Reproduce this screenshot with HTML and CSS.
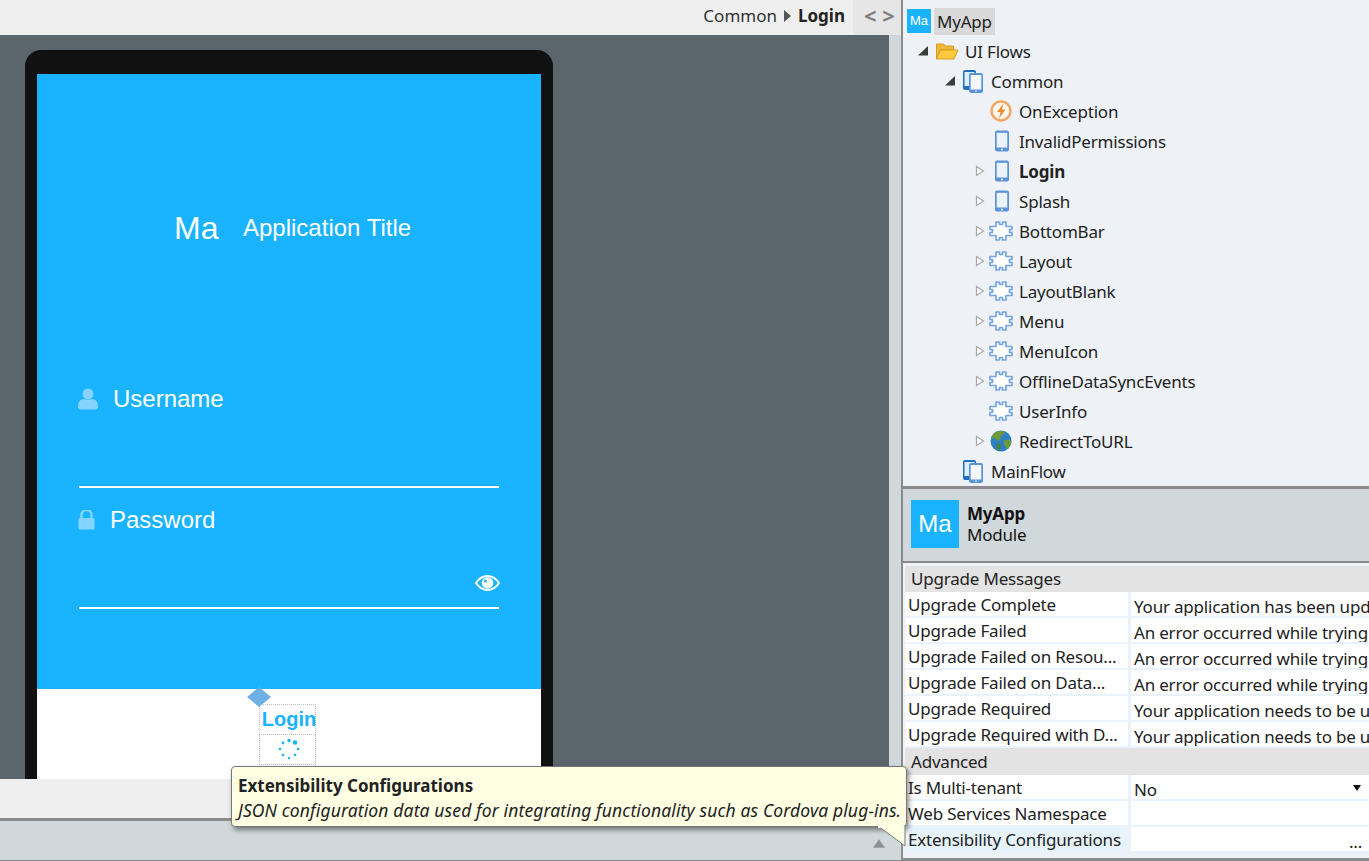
FILE: index.html
```html
<!DOCTYPE html>
<html lang="en">
<head>
  <meta charset="UTF-8" />
  <title>MyApp - Login</title>
  <link rel="stylesheet" href="styles.css">
</head>
<body>
  <svg class="defs" width="0" height="0">
    <symbol id="i-phone" viewBox="0 0 22 24">
      <rect x="5" y="1.500" width="14" height="21" rx="2" fill="#5b93d8"/>
      <rect x="6.700" y="3.800" width="10.600" height="14.700" fill="#eaf2fb"/>
      <circle cx="12" cy="20.500" r="0.900" fill="#fff"/>
    </symbol>
    <symbol id="i-flow" viewBox="0 0 24 24">
      <rect x="2" y="1" width="13" height="20" rx="2" fill="#1f6fc0"/>
      <rect x="3.500" y="3" width="10" height="14" fill="#dfeefb"/>
      <rect x="8" y="4" width="14" height="20" rx="2" fill="#5b93d8"/>
      <rect x="9.700" y="6" width="10.600" height="14.500" fill="#f4f8fd"/>
      <circle cx="15" cy="22" r="0.800" fill="#fff"/>
    </symbol>
    <symbol id="i-block" viewBox="0 0 24 20">
      <path d="M7 1H10.500V3.500H13.500V1H17V5.500H23V8.500H20.500V11.500H23V14.500H17V19H13.500V16.500H10.500V19H7V14.500H1V11.500H3.500V8.500H1V5.500H7Z" fill="#fff" stroke="#76a5e2" stroke-width="1.700" stroke-linejoin="round"/>
    </symbol>
    <symbol id="i-open" viewBox="0 0 10 12">
      <path d="M1.500 1.500l7 4.500-7 4.500z" fill="#fff" stroke="#a8a8a8" stroke-width="1.200"/>
    </symbol>
    <symbol id="i-shut" viewBox="0 0 10 10">
      <path d="M0 9.500h10v-9.500z" fill="#3c3c3c"/>
    </symbol>
  </svg>

  <div class="app">
    <main class="designer">
      <header class="crumbs">
        <span class="crumb">Common</span>
        <svg class="crumb-arrow" width="7" height="12" viewBox="0 0 7 12"><path d="M0 0l7 6-7 6z" fill="#555"/></svg>
        <span class="crumb current">Login</span>
        <span class="code-toggle">&lt; &gt;</span>
      </header>

      <div class="canvas-wrap">
        <div class="canvas">
          <div class="device">
            <div class="screen">
              <div class="hero">
                <div class="brand">
                  <span class="brand-mark">Ma</span>
                  <span class="brand-title">Application Title</span>
                </div>
                <div class="field field-user">
                  <div class="field-label">
                    <svg class="field-icon" width="20" height="22" viewBox="0 0 20 22">
                      <circle cx="10" cy="6" r="5.500" fill="#85d4ff"/>
                      <path d="M0 19c0-5 2-7.500 5.500-8 1.500 1 7.500 1 9 0 3.500 0.500 5.500 3 5.500 8 0 1.500-1 2.500-2.500 2.500h-15c-1.500 0-2.500-1-2.500-2.500z" fill="#85d4ff"/>
                    </svg>
                    <span class="label-user">Username</span>
                  </div>
                </div>
                <div class="field field-pass">
                  <div class="field-label">
                    <svg class="field-icon" width="17" height="20" viewBox="0 0 17 20">
                      <path d="M3.500 8v-3a5 5 0 0 1 10 0v3" fill="none" stroke="#85d4ff" stroke-width="2.400"/>
                      <rect x="0.500" y="8" width="16" height="11.500" rx="1.500" fill="#85d4ff"/>
                    </svg>
                    <span class="label-pass">Password</span>
                  </div>
                  <svg class="eye" width="25" height="18" viewBox="0 0 25 18">
                    <path d="M1 9c3-4.500 7-7 11.500-7s8.500 2.500 11.500 7c-3 4.500-7 7-11.500 7s-8.500-2.500-11.500-7z" fill="none" stroke="#fff" stroke-width="2"/>
                    <circle cx="12.500" cy="9" r="5.800" fill="#fff"/>
                    <circle cx="10.500" cy="7" r="1.600" fill="#1ab3ff"/>
                  </svg>
                </div>
              </div>
              <div class="actions">
                <span class="anchor"></span>
                <div class="login-box">Login</div>
                <div class="spinner-box">
                  <svg width="22" height="22" viewBox="0 0 22 22">
                    <circle cx="11" cy="2.500" r="1.700" fill="#1ab3ff"/>
                    <circle cx="17" cy="4.500" r="2.300" fill="#1ab3ff"/>
                    <circle cx="20" cy="11" r="1.300" fill="#1ab3ff"/>
                    <circle cx="17" cy="17" r="1.300" fill="#1ab3ff"/>
                    <circle cx="11" cy="20" r="1.200" fill="#1ab3ff"/>
                    <circle cx="5" cy="17" r="1.300" fill="#1ab3ff"/>
                    <circle cx="2" cy="11" r="1.300" fill="#1ab3ff"/>
                    <circle cx="5" cy="5" r="1.400" fill="#1ab3ff"/>
                  </svg>
                </div>
              </div>
            </div>
          </div>
        </div>
        <div class="canvas-scroll"></div>
      </div>

      <div class="canvas-foot"></div>
      <div class="debug-bar">
        <svg class="bar-arrow" width="12" height="9" viewBox="0 0 14 10"><path d="M7 0l7 10h-14z" fill="#8c9296"/></svg>
      </div>

      <div class="tooltip">
        <div class="tooltip-title">Extensibility Configurations</div>
        <div class="tooltip-text">JSON configuration data used for integrating functionality such as Cordova plug-ins.</div>
        <svg class="tooltip-tail" width="28" height="22" viewBox="0 0 28 22">
          <path d="M0 0l27 20v-20z" fill="#ffffe4"/>
          <path d="M0 0l27 20v-20" fill="none" stroke="#777" stroke-width="1"/>
          <rect x="0" y="0" width="26" height="2" fill="#ffffe4"/>
        </svg>
      </div>
    </main>

    <aside class="side">
      <nav class="tree">
        <div class="tree-root">
          <span class="mini-mark">Ma</span>
          <span class="root-name">MyApp</span>
        </div>
        <div class="row d1">
          <span class="arrow"><svg width="10" height="10"><use href="#i-shut"/></svg></span>
          <svg class="ico" width="24" height="20" viewBox="0 0 24 20">
            <path d="M1.500 18v-15h7l2 2h8v4h-13l-3.500 9z" fill="#eeb93a" stroke="#d79d20"/>
            <path d="M5.500 9h17.500l-4 9h-17.500z" fill="#fcca3f" stroke="#d79d20"/>
          </svg>
          <span>UI Flows</span>
        </div>
        <div class="row d2">
          <span class="arrow"><svg width="10" height="10"><use href="#i-shut"/></svg></span>
          <svg class="ico" width="24" height="24"><use href="#i-flow"/></svg>
          <span>Common</span>
        </div>
        <div class="row d3">
          <span class="arrow"></span>
          <svg class="ico" width="24" height="24" viewBox="0 0 24 24">
            <circle cx="12" cy="12" r="9.500" fill="#fff6ec" stroke="#f3a665" stroke-width="2.400"/>
            <path d="M14.500 4.500l-6.500 8.500h3.500l-1.500 6.500 6.500-9h-3.500z" fill="#ee8a2e"/>
          </svg>
          <span>OnException</span>
        </div>
        <div class="row d3">
          <span class="arrow"></span>
          <svg class="ico" width="24" height="24"><use href="#i-phone"/></svg>
          <span>InvalidPermissions</span>
        </div>
        <div class="row d3 selected">
          <span class="arrow"><svg width="10" height="12"><use href="#i-open"/></svg></span>
          <svg class="ico" width="24" height="24"><use href="#i-phone"/></svg>
          <span>Login</span>
        </div>
        <div class="row d3">
          <span class="arrow"><svg width="10" height="12"><use href="#i-open"/></svg></span>
          <svg class="ico" width="24" height="24"><use href="#i-phone"/></svg>
          <span>Splash</span>
        </div>
        <div class="row d3">
          <span class="arrow"><svg width="10" height="12"><use href="#i-open"/></svg></span>
          <svg class="ico" width="24" height="20"><use href="#i-block"/></svg>
          <span>BottomBar</span>
        </div>
        <div class="row d3">
          <span class="arrow"><svg width="10" height="12"><use href="#i-open"/></svg></span>
          <svg class="ico" width="24" height="20"><use href="#i-block"/></svg>
          <span>Layout</span>
        </div>
        <div class="row d3">
          <span class="arrow"><svg width="10" height="12"><use href="#i-open"/></svg></span>
          <svg class="ico" width="24" height="20"><use href="#i-block"/></svg>
          <span>LayoutBlank</span>
        </div>
        <div class="row d3">
          <span class="arrow"><svg width="10" height="12"><use href="#i-open"/></svg></span>
          <svg class="ico" width="24" height="20"><use href="#i-block"/></svg>
          <span>Menu</span>
        </div>
        <div class="row d3">
          <span class="arrow"><svg width="10" height="12"><use href="#i-open"/></svg></span>
          <svg class="ico" width="24" height="20"><use href="#i-block"/></svg>
          <span>MenuIcon</span>
        </div>
        <div class="row d3">
          <span class="arrow"><svg width="10" height="12"><use href="#i-open"/></svg></span>
          <svg class="ico" width="24" height="20"><use href="#i-block"/></svg>
          <span>OfflineDataSyncEvents</span>
        </div>
        <div class="row d3">
          <span class="arrow"></span>
          <svg class="ico" width="24" height="20"><use href="#i-block"/></svg>
          <span>UserInfo</span>
        </div>
        <div class="row d3">
          <span class="arrow"><svg width="10" height="12"><use href="#i-open"/></svg></span>
          <svg class="ico" width="24" height="24" viewBox="0 0 24 24">
            <circle cx="12" cy="12" r="10.500" fill="#2c7fc4"/>
            <path d="M7 3c3-1.500 7-1.500 9 0l-2 3-3 1 1 3-3 2-3-3-3.500 1c0-3 1.500-5.500 4.500-7zM14 12l6-2 2.500 3c-0.500 3-2 5.500-4.500 7l-2-3z" fill="#6f9a3a"/>
            <path d="M8 14l3 1 1 3-2 4-2-3z" fill="#4f7d2f"/>
          </svg>
          <span>RedirectToURL</span>
        </div>
        <div class="row d2">
          <span class="arrow"></span>
          <svg class="ico" width="24" height="24"><use href="#i-flow"/></svg>
          <span>MainFlow</span>
        </div>
      </nav>

      <section class="module">
        <span class="module-mark">Ma</span>
        <div class="module-info">
          <strong>MyApp</strong>
          <span>Module</span>
        </div>
      </section>

      <section class="props">
        <div class="group">Upgrade Messages</div>
        <div class="prop"><span class="key">Upgrade Complete</span><span class="val">Your application has been updated successfully</span></div>
        <div class="prop"><span class="key">Upgrade Failed</span><span class="val">An error occurred while trying to upgrade</span></div>
        <div class="prop"><span class="key">Upgrade Failed on Resou...</span><span class="val">An error occurred while trying to upgrade</span></div>
        <div class="prop"><span class="key">Upgrade Failed on Data...</span><span class="val">An error occurred while trying to upgrade</span></div>
        <div class="prop"><span class="key">Upgrade Required</span><span class="val">Your application needs to be upgraded</span></div>
        <div class="prop"><span class="key">Upgrade Required with D...</span><span class="val">Your application needs to be upgraded</span></div>
        <div class="group group-tall">Advanced</div>
        <div class="prop"><span class="key">Is Multi-tenant</span><span class="val val-select">No<i class="caret"></i></span></div>
        <div class="prop"><span class="key">Web Services Namespace</span><span class="val"></span></div>
        <div class="prop hovered"><span class="key">Extensibility Configurations</span><span class="val val-more">...</span></div>
      </section>
    </aside>
  </div>
</body>
</html>
```

FILE: styles.css
```css
html, body {
  margin: 0;
  height: 100%;
  overflow: hidden;
}
body {
  font-family: "Noto Sans", "Open Sans", sans-serif;
  font-size: 17px;
  letter-spacing: -0.2px;
  color: #222;
  background: #eef2f6;
}
.defs {
  position: absolute;
}
.app {
  display: grid;
  grid-template-columns: 901px 2px 1fr;
  height: 861px;
  background: #8a8a8a;
}

/* left side */
.designer {
  position: relative;
  grid-column: 1;
  display: flex;
  flex-direction: column;
  min-width: 0;
  letter-spacing: 0;
}
.crumbs {
  height: 35px;
  background: #efefef;
  display: flex;
  align-items: center;
  justify-content: flex-end;
}
.crumb {
  font-size: 17px;
  color: #333;
  margin-bottom: 4px;
}
.crumb.current {
  font-weight: 700;
  color: #222;
  margin-right: 8px;
}
.crumb-arrow {
  margin: 0 7px 4px;
}
.code-toggle {
  width: 48px;
  height: 35px;
  line-height: 31px;
  background: #e6e6e6;
  color: #808080;
  font-size: 22px;
  font-weight: 700;
  padding-left: 11px;
  box-sizing: border-box;
}
.canvas-wrap {
  height: 744px;
  display: flex;
}
.canvas {
  flex: 1;
  background: #5a666b;
  padding: 15px 0 0 25px;
  overflow: hidden;
}
.canvas-scroll {
  width: 12px;
  background: #d1d8db;
}
.device {
  width: 504px;
  height: 729px;
  padding: 24px 12px 0;
  background: #111;
  border-radius: 16px 16px 0 0;
  overflow: hidden;
}
.screen {
  font-family: "Liberation Sans", Arial, sans-serif;
  height: 705px;
  background: #fff;
}
.hero {
  height: 615px;
  background: #1ab3ff;
  color: #fff;
  padding: 130px 42px 0;
  box-sizing: border-box;
}
.brand {
  height: 48px;
  display: flex;
  align-items: center;
  padding-left: 95px;
}
.brand-mark {
  font-size: 32px;
  width: 69px;
}
.brand-title {
  font-size: 24px;
}
.field {
  border-bottom: 2px solid #fff;
  box-sizing: border-box;
}
.field-user {
  height: 109px;
  margin-top: 127px;
}
.field-pass {
  height: 121px;
  padding-top: 12px;
  position: relative;
}
.field-label {
  display: flex;
  align-items: center;
  height: 40px;
  font-size: 24px;
}
.label-user {
  margin-left: 15px;
}
.label-pass {
  margin-left: 15px;
}
.field-icon {
  margin-left: -1px;
}
.eye {
  position: absolute;
  right: -1px;
  bottom: 15px;
}
.actions {
  position: relative;
  padding: 15px 0 0 222px;
}
.anchor {
  position: absolute;
  left: 210px;
  top: -2px;
  width: 24px;
  height: 20px;
  background: #6fb0e6;
  clip-path: polygon(50% 0, 100% 50%, 50% 100%, 0 50%);
}
.login-box, .spinner-box {
  width: 57px;
  height: 31px;
  box-sizing: border-box;
  border: 1px dotted #bbb;
  display: flex;
  align-items: center;
  justify-content: center;
}
.login-box {
  color: #1ab3ff;
  font-size: 20px;
  font-weight: 700;
  white-space: nowrap;
  padding-left: 3px;
}
.spinner-box {
  border-top: 0;
  height: 30px;
  padding: 0 0 2px 2px;
}
.canvas-foot {
  height: 39px;
  background: #efefef;
}
.debug-bar {
  flex: 1;
  border-top: 3px solid #8a8a8a;
  border-bottom: 1px solid #8a8a8a;
  background: #d1d8db;
  display: flex;
  align-items: center;
  justify-content: flex-end;
  padding-right: 16px;
}
.bar-arrow {
  margin-top: 5px;
}

/* tooltip over the property grid */
.tooltip {
  position: absolute;
  z-index: 5;
  left: 231px;
  top: 766px;
  width: 676px;
  height: 61px;
  box-sizing: border-box;
  padding: 8px 6px;
  background: #ffffe4;
  border: 1px solid #777;
  border-radius: 4px;
  box-shadow: 2px 3px 5px rgba(0,0,0,0.45);
  color: #222;
}
.tooltip-title {
  font-weight: 700;
  font-size: 17px;
  line-height: 22px;
}
.tooltip-text {
  font-style: italic;
  font-size: 17.500px;
  letter-spacing: 0.130px;
  line-height: 26px;
  white-space: nowrap;
}
.tooltip-tail {
  position: absolute;
  right: 0;
  top: 59px;
}

/* right side */
.side {
  grid-column: 3;
  display: flex;
  flex-direction: column;
  min-width: 0;
  background: #eef2f6;
}
.tree {
  height: 489px;
  padding-top: 6px;
  box-sizing: border-box;
  white-space: nowrap;
  border-bottom: 3px solid #8a8a8a;
}
.tree-root {
  display: flex;
  align-items: center;
  height: 30px;
  padding-left: 4px;
}
.mini-mark {
  width: 24px;
  height: 24px;
  background: #1ab3ff;
  color: #fff;
  font-family: "Liberation Sans", Arial, sans-serif;
  font-size: 13px;
  letter-spacing: 0;
  line-height: 24px;
  text-align: center;
}
.root-name {
  margin-left: 3px;
  padding: 0 3px;
  background: #d9d9d9;
  height: 27px;
  line-height: 27px;
}
.row {
  display: flex;
  align-items: center;
  height: 30px;
}
.arrow {
  width: 14px;
  display: flex;
  align-items: center;
  flex: none;
}
.ico {
  flex: none;
  margin-right: 6px;
}
.d1 {
  padding-left: 18px;
}
.d2 {
  padding-left: 44px;
}
.d3 {
  padding-left: 72px;
}
.d1 .arrow {
  margin-left: -3px;
  margin-right: 3px;
}
.d2 .arrow {
  margin-left: -2px;
  margin-right: 2px;
}
.selected {
  font-weight: 700;
}
.module {
  height: 74px;
  box-sizing: border-box;
  display: flex;
  align-items: center;
  padding-left: 8px;
  background: #d1d8db;
  border-bottom: 2px solid #8a8a8a;
}
.module-mark {
  width: 48px;
  height: 48px;
  margin-bottom: 2px;
  background: #1ab3ff;
  color: #fff;
  font-family: "Liberation Sans", Arial, sans-serif;
  font-size: 24px;
  letter-spacing: 0;
  line-height: 48px;
  text-align: center;
}
.module-info {
  margin: 0 0 2px 8px;
  display: flex;
  flex-direction: column;
  line-height: 21px;
  color: #111;
}
.props {
  flex: 1;
  padding: 3px 0 0 2px;
  overflow: hidden;
  white-space: nowrap;
  border-bottom: 3px solid #8a8a8a;
}
.group {
  height: 26px;
  line-height: 26px;
  padding-left: 6px;
  background: #e3e3e3;
}
.group-tall {
  height: 27px;
  line-height: 28px;
}
.prop {
  display: grid;
  grid-template-columns: 223px 3px 1fr;
  height: 26px;
  box-sizing: border-box;
  border-bottom: 2px solid #eaf3fb;
  background: #eaf3fb;
}
.key {
  grid-column: 1;
  background: #fff;
  padding-left: 3px;
  line-height: 26px;
  overflow: hidden;
}
.val {
  grid-column: 3;
  background: #fff;
  padding-left: 3px;
  line-height: 29px;
  overflow: hidden;
  position: relative;
}
.caret {
  position: absolute;
  right: 8px;
  top: 10px;
  border: 4px solid transparent;
  border-top: 6px solid #111;
  border-bottom: 0;
}
.val-more {
  text-align: right;
  padding-right: 7px;
}
.hovered .key {
  background: #e6f3fb;
  margin-right: 5px;
}
```
